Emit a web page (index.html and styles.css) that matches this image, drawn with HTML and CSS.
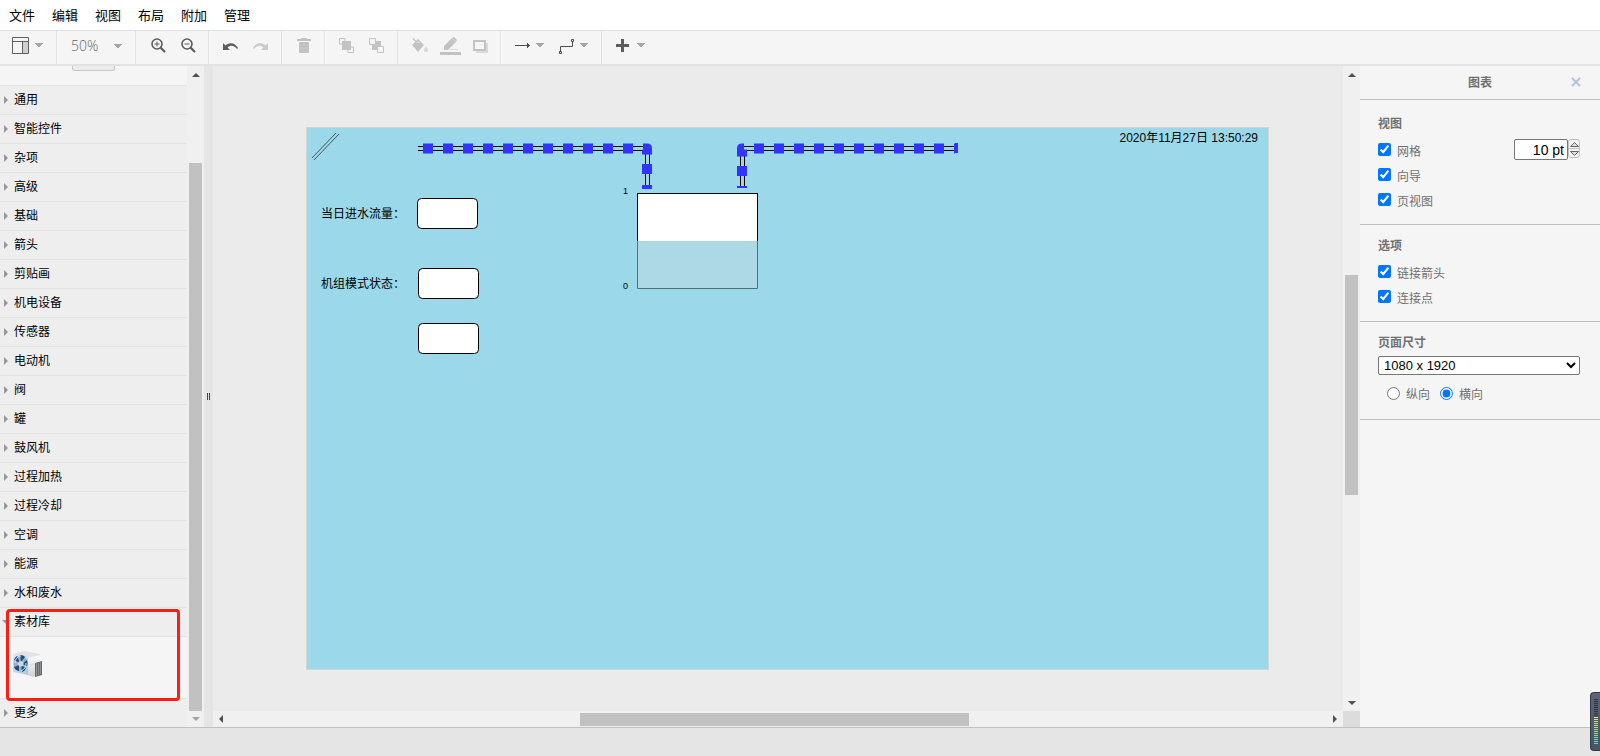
FILE: index.html
```html
<!DOCTYPE html>
<html lang="zh-CN">
<head>
<meta charset="utf-8">
<title>组态编辑器</title>
<link rel="stylesheet" href="styles.css">
</head>
<body>
<svg class="defs" aria-hidden="true">
  <symbol id="caret" viewBox="0 0 8 5"><path d="M0 0h8v1H0zM1 1h6v1H1zM2 2h4v1H2zM3 3h2v1H3z" fill="#a6a6a6"/></symbol>
</svg>
<nav class="menubar">
  <a href="#">文件</a><a href="#">编辑</a><a href="#">视图</a><a href="#">布局</a><a href="#">附加</a><a href="#">管理</a>
</nav>
<div class="toolbar">
  <div class="group g-view">
    <button class="tool" aria-label="视图">
      <svg width="18" height="18" viewBox="0 0 18 18"><path d="M11 5h5v11h-5z" fill="#cfcfcf"/><path d="M.5 .5h16v16H.5zM.5 4.500h16M10.500 4.500v12" fill="none" stroke="#616161"/></svg>
      <svg class="caret"><use href="#caret"/></svg>
    </button>
  </div>
  <div class="group g-zoom">
    <select class="zoom" aria-label="缩放"><option>50%</option></select>
    <svg class="caret"><use href="#caret"/></svg>
  </div>
  <div class="group g-pair g-lens">
    <button class="tool" aria-label="放大"><svg width="16" height="16" viewBox="0 0 16 16" fill="none" stroke="#5c5c5c"><circle cx="6" cy="6" r="5" stroke-width="1.600"/><path d="M9.500 9.500l4.500 4.500" stroke-width="2.200"/><path d="M3.500 6h5M6 3.500v5"/></svg></button>
    <button class="tool" aria-label="缩小"><svg width="16" height="16" viewBox="0 0 16 16" fill="none" stroke="#5c5c5c"><circle cx="6" cy="6" r="5" stroke-width="1.600"/><path d="M9.500 9.500l4.500 4.500" stroke-width="2.200"/><path d="M3.500 6h5"/></svg></button>
  </div>
  <div class="group g-pair">
    <button class="tool" aria-label="撤销"><svg width="16" height="16" viewBox="0 0 16 16"><path d="M0 5v7h7L4.500 9.500C7 7 11 7 14 11l1-1C12 4.500 6.500 4 2.500 7.500z" fill="#5c5c5c"/></svg></button>
    <button class="tool" aria-label="重做"><svg width="16" height="16" viewBox="0 0 16 16"><path d="M15 5v7H8l2.500-2.500C8 7 4 7 1 11l-1-1C3 4.500 8.500 4 12.500 7.500z" fill="#c9c9c9"/></svg></button>
  </div>
  <div class="group g-single">
    <button class="tool" aria-label="删除"><svg width="16" height="16" viewBox="0 0 16 16"><path d="M1 1h4V0h6v1h4v2H1zM3 4h10v11H3z" fill="#c3c3c3"/></svg></button>
  </div>
  <div class="group g-pair">
    <button class="tool" aria-label="置前"><svg width="16" height="16" viewBox="0 0 16 16"><path d="M3 3h9v9H3z" fill="#c3c3c3"/><path d="M6 .5H.5V6M9 14.500h5.500V9M.5 6H3M6 .5V3M9 14.500V12M14.500 9H12" fill="none" stroke="#c3c3c3"/></svg></button>
    <button class="tool" aria-label="置后"><svg width="16" height="16" viewBox="0 0 16 16"><path d="M3 3h9v9H3z" fill="#c3c3c3"/><path d="M.5 .5h6v6h-6zM8.500 8.500h6v6h-6z" fill="#f5f5f5" stroke="#c3c3c3"/></svg></button>
  </div>
  <div class="group g-style">
    <button class="tool" aria-label="填充"><svg width="18" height="18" viewBox="0 0 18 18"><path d="M2 1.500l4 4M2 8l5-5 5 5" stroke="#c3c3c3" fill="none" stroke-width="1.300"/><path d="M1 8l3-2h6l3 2-6 7z" fill="#c3c3c3"/><path d="M7 3v3" stroke="#c3c3c3"/><path d="M15 9l2 3v2l-1 1h-2l-1-1v-2z" fill="#d9d9d9"/></svg></button>
    <button class="tool" aria-label="线条"><svg width="22" height="18" viewBox="0 0 22 18"><path d="M4 9L12 1l2-1 3 3-1 2-8 8H4z" fill="#c3c3c3"/><path d="M12.500 1.500l3 3" stroke="#f5f5f5" stroke-width=".5"/><path d="M10 12h8v1h-8z" fill="#dcdcdc"/><path d="M0 15h21v3H0z" fill="#c3c3c3"/></svg></button>
    <button class="tool" aria-label="阴影"><svg width="16" height="16" viewBox="0 0 16 16"><path d="M3 5h12v10H3z" fill="#d9d9d9"/><path d="M1 3h11v9H1z" fill="#f5f5f5" stroke="#c3c3c3" stroke-width="2"/></svg></button>
  </div>
  <div class="group g-line">
    <button class="tool" aria-label="连接"><svg width="16" height="16" viewBox="0 0 16 16"><path d="M0 7h12V5h1v1h1v1h1v1h-1v1h-1v1h-1V8H0z" fill="#4d4d4d"/></svg><svg class="caret"><use href="#caret"/></svg></button>
    <button class="tool" aria-label="航点"><svg width="16" height="16" viewBox="0 0 16 16" fill="none" stroke="#4d4d4d"><path d="M1.500 13V8.500h12V3M.5 13.500h2v2h-2zM12.500 1.500h2v2h-2z"/></svg><svg class="caret"><use href="#caret"/></svg></button>
  </div>
  <div class="group g-add">
    <button class="tool" aria-label="插入"><svg width="14" height="14" viewBox="0 0 14 14"><path d="M5 0h3v5h5v3H8v5H5V8H0V5h5z" fill="#5c5c5c"/></svg><svg class="caret"><use href="#caret"/></svg></button>
  </div>
</div>
<main class="work">
  <aside class="side">
    <div class="library">
      <div class="search"><button class="tab" aria-label="搜索"></button></div>
      <a class="row" href="#">通用</a>
      <a class="row" href="#">智能控件</a>
      <a class="row" href="#">杂项</a>
      <a class="row" href="#">高级</a>
      <a class="row" href="#">基础</a>
      <a class="row" href="#">箭头</a>
      <a class="row" href="#">剪贴画</a>
      <a class="row" href="#">机电设备</a>
      <a class="row" href="#">传感器</a>
      <a class="row" href="#">电动机</a>
      <a class="row" href="#">阀</a>
      <a class="row" href="#">罐</a>
      <a class="row" href="#">鼓风机</a>
      <a class="row" href="#">过程加热</a>
      <a class="row" href="#">过程冷却</a>
      <a class="row" href="#">空调</a>
      <a class="row" href="#">能源</a>
      <a class="row" href="#">水和废水</a>
      <div class="material">
        <a class="row open" href="#">素材库</a>
        <div class="shapes">
          <svg width="32" height="30" viewBox="0 0 32 30">
            <defs>
              <linearGradient id="body" x1="0" y1="0" x2="0" y2="1"><stop offset="0" stop-color="#fdfdfd"/><stop offset="1" stop-color="#cfd0d3"/></linearGradient>
              <linearGradient id="face" x1="0" y1="0" x2="1" y2="1"><stop offset="0" stop-color="#e3e9f0"/><stop offset="1" stop-color="#a9c4e2"/></linearGradient>
            </defs>
            <path d="M1 6Q4 3 12 2l16 3q1 1 1 3L16 10z" fill="#e2e2e4"/>
            <path d="M15 9l14-3v18l-8 4-6-2z" fill="url(#body)"/>
            <path d="M1 6l15 3v17L1 23z" fill="url(#face)"/>
            <ellipse cx="8.500" cy="14.500" rx="7" ry="8" fill="#8fb4d8"/>
            <path d="M8 14L2 11q1-3 3-4zM9 13L8 6q4 0 5 2zM10 15l5-4q1 3 0 6zM9 16l5 3q-1 3-4 4zM7 16l0 6q-4-1-5-4z" fill="#244f78"/>
            <path d="M3 14q0-6 6-7M14 14q0 6-5 8" fill="none" stroke="#d2e4f4"/>
            <circle cx="8.800" cy="14.800" r="2.800" fill="#ccd3da"/>
            <path d="M23 14l7-2v14l-7 2z" fill="#66696d"/><path d="M24.500 14v13M26.500 14v12M28.500 13v12" stroke="#96999c" stroke-width=".8"/>
            <path d="M17 16l6-1" stroke="#dcdde0"/>
          </svg>
        </div>
        <div class="marker"></div>
      </div>
      <a class="row" href="#">更多</a>
    </div>
    <div class="vbar side-bar"><i class="up"></i><div class="track"><b></b></div><i class="down pale"></i></div>
  </aside>
  <div class="splitter"><span></span><span></span></div>
  <section class="canvas">
    <div class="sheet">
      <svg class="drawing" width="961" height="541" viewBox="0 0 961 541">
        <defs>
          <g id="box"><rect x=".5" y=".5" width="60" height="30" rx="4" fill="#fff" stroke="#000"/></g>
        </defs>
        <path d="M5 30L29 5M7 32L32 6" stroke="#333" stroke-width=".8"/>
        <g fill="none">
          <path d="M111 18.500H342.500V60M111 22.500H338.500V60" stroke="#000"/>
          <path d="M116 20.500H335" stroke="#33f" stroke-width="10" stroke-dasharray="10 10"/>
          <path d="M651 18.500H433.500V60M651 22.500H437.500V60" stroke="#000"/>
          <path d="M447 20.500H648" stroke="#33f" stroke-width="10" stroke-dasharray="10 10"/>
        </g>
        <g fill="#33f">
          <path d="M336 15.500h4q5 0 5 5v6h-10v-4h1zM335 36h10v10h-10zM335 57h10v4h-10z"/>
          <path d="M437 15.500h-2q-5 0-5 5v8h10v-7h-3zM430 38h10v10h-10zM430 58h10v2h-10zM648 15h3v10h-3z"/>
        </g>
        <use href="#box" x="110" y="70"/><use href="#box" x="111" y="140"/><use href="#box" x="111" y="195"/>
        <rect x="330.500" y="65.500" width="120" height="95" fill="#fff" stroke="#000"/>
        <rect x="330" y="113" width="121" height="48" fill="#add8e6"/>
        <path d="M330.500 113v47.500h120V113" fill="none" stroke="#56707a"/>
        <g class="label"><text x="14" y="90">当日进水流量<tspan class="colon">：</tspan></text><text x="14" y="160">机组模式状态<tspan class="colon">：</tspan></text></g>
        <text class="stamp" x="951" y="14" text-anchor="end">2020年11月27日 13:50:29</text>
        <g class="tick"><text x="316" y="66">1</text><text x="316" y="161">0</text></g>
      </svg>
    </div>
  </section>
  <div class="vbar canvas-bar"><i class="up"></i><div class="track"><b></b></div><i class="down"></i></div>
  <div class="hbar"><i class="left"></i><div class="track"><b></b></div><i class="right"></i></div>
  <div class="corner"></div>
  <aside class="format">
    <header><h1>图表</h1><button class="close" aria-label="关闭"><svg width="10" height="10" viewBox="0 0 10 10"><path d="M1 1l8 8M9 1L1 9" stroke="#b3c3dc" stroke-width="2"/></svg></button></header>
    <section class="view">
      <h2>视图</h2>
      <div class="line"><label><input type="checkbox" checked><span>网格</span></label>
        <div class="stepper"><input type="text" value="10 pt" aria-label="网格大小"><div class="spin"><button aria-label="增加"><svg width="9" height="5" viewBox="0 0 9 5"><path d="M.5 4.500h8l-4-4z" fill="#ddd" stroke="#666"/></svg></button><button aria-label="减少"><svg width="9" height="5" viewBox="0 0 9 5"><path d="M.5 .5h8l-4 4z" fill="#ddd" stroke="#666"/></svg></button></div></div>
      </div>
      <div class="line"><label><input type="checkbox" checked><span>向导</span></label></div>
      <div class="line"><label><input type="checkbox" checked><span>页视图</span></label></div>
    </section>
    <section>
      <h2>选项</h2>
      <div class="line"><label><input type="checkbox" checked><span>链接箭头</span></label></div>
      <div class="line"><label><input type="checkbox" checked><span>连接点</span></label></div>
    </section>
    <section class="size">
      <h2><label for="paper">页面尺寸</label></h2>
      <select id="paper"><option>1080 x 1920</option></select>
      <div class="radios"><label><input type="radio" name="dir"><span>纵向</span></label><label><input type="radio" name="dir" checked><span>横向</span></label></div>
    </section>
  </aside>
</main>
<footer class="status"></footer>
<div class="meter"><span></span></div>
</body>
</html>
```
FILE: styles.css
```css
* { box-sizing: border-box; }
body {
  margin: 0;
  height: 100vh;
  display: flex;
  flex-direction: column;
  overflow: hidden;
  background: #f5f5f5;
  font: 12px/16px "Liberation Sans", "Noto Sans CJK SC", sans-serif;
  color: #000;
}
a { color: inherit; text-decoration: none; }
button { border: 0; padding: 0; background: none; display: flex; align-items: center; }
svg { display: block; flex: none; }
.defs { position: absolute; width: 0; height: 0; }

.menubar {
  height: 31px;
  display: flex;
  align-items: center;
  gap: 17px;
  padding: 1px 0 0 9px;
  background: #fff;
  border-bottom: 1px solid #e0e0e0;
  font-size: 13px;
}
.toolbar { height: 35px; display: flex; border-bottom: 2px solid #e2e2e2; }
.group { display: flex; align-items: center; padding: 0 0 4px 14px; border-right: 1px solid #e3e3e3; position: relative; }
.caret { width: 8px; height: 5px; }
.tool { gap: 5px; }
.g-view { width: 57px; padding-left: 12px; }
.g-zoom { width: 79px; }
.g-zoom .caret { position: absolute; right: 13px; top: 13px; pointer-events: none; }
.zoom { appearance: none; border: 0; padding: 0; width: 52px; background: none; color: #666; font: 300 14px/20px "Open Sans", sans-serif; }
.g-pair { width: 73px; gap: 14px; }
.g-lens { padding-left: 15px; }
.g-single { width: 43px; }
.g-style { width: 103px; gap: 11px; padding-left: 13px; }
.g-line { width: 101px; gap: 15px; }
.g-add { border: 0; }
.g-add .tool { gap: 7px; }

.work {
  flex: 1;
  min-height: 0;
  display: grid;
  grid-template: minmax(0, 1fr) 16px / 204px 9px minmax(0, 1fr) 17px 240px;
}
.side { grid-row: 1 / 3; display: grid; grid-template-columns: 1fr 17px; min-height: 0; }
.library { overflow: hidden; }
.search { height: 19px; padding-left: 72px; }
.tab { width: 43px; height: 5px; background: #ececec; border: 1px solid #c6c6c6; border-top: 0; border-radius: 0 0 3px 3px; }
.row {
  display: flex;
  align-items: center;
  height: 29px;
  padding-left: 4px;
  gap: 6px;
  background: #eee;
  border-top: 1px solid #e3e3e3;
}
.row::before { content: ""; border: 4px solid transparent; border-left-color: #979797; border-right: 0; }
.row.open { padding-left: 2px; gap: 4px; }
.row.open::before { border: 4px solid transparent; border-top-color: #979797; border-bottom: 0; }
.material { position: relative; }
.shapes { height: 62px; padding: 12px 12px; border-top: 1px solid #e3e3e3; background: #f5f5f5; }
.marker { position: absolute; left: 6px; top: 2px; width: 174px; height: 92px; border: 3px solid #ff1d12; border-radius: 4px; }

.vbar { background: #f0f0f0; display: flex; flex-direction: column; align-items: center; min-height: 0; }
.hbar { background: #f0f0f0; display: flex; align-items: center; grid-area: 2 / 3; }
.canvas-bar { grid-area: 1 / 4; }
.corner { grid-area: 2 / 4; background: #dcdcdc; }
.track { flex: 1; min-height: 0; display: flex; }
.track::before, .track::after { content: ""; }
.vbar .track { flex-direction: column; width: 13px; }
.track b { background: #c1c1c1; }
.canvas-bar .track::before { flex: 192; }
.canvas-bar b { flex: 219; }
.canvas-bar .track::after { flex: 200; }
.side-bar .track::before { flex: 80; }
.side-bar b { flex: 548; }
.hbar .track { height: 13px; }
.hbar .track::before { flex: 350; }
.hbar b { flex: 389; }
.hbar .track::after { flex: 357; }
.vbar i, .hbar i { border: 4px solid transparent; }
.vbar .up { border-bottom-color: #505050; border-top: 0; margin: 7px 0 6px; }
.vbar .down { border-top-color: #505050; border-bottom: 0; margin: 6px 0 6px; }
.vbar .pale { border-top-color: #a3a3a3; }
.hbar .left { border-right-color: #505050; border-left: 0; margin: 0 7px 0 6px; }
.hbar .right { border-left-color: #505050; border-right: 0; margin: 0 6px 0 7px; }

.splitter { grid-area: 1 / 2 / 3; background: #e5e5e5; display: flex; align-items: center; justify-content: center; gap: 1px; }
.splitter span { width: 1px; height: 7px; background: #444; }

.canvas { grid-area: 1 / 3; background: #ebebeb; overflow: hidden; position: relative; }
.sheet { position: absolute; left: 94px; top: 62px; background: #9bd9ea; outline: 1px solid #cfd6d8; }
.label, .stamp { font-size: 12px; }
.colon { font-family: "Noto Sans CJK TC", sans-serif; }
.tick { font-size: 9px; }

.format { grid-area: 1 / 5 / 3; color: #707070; }
.format header { height: 34px; padding-top: 1px; display: grid; align-items: center; border-bottom: 1px solid #c0c0c0; position: relative; }
h1, h2 { margin: 0; font-size: 12px; line-height: 16px; }
h1 { text-align: center; }
.close { position: absolute; right: 19px; top: 11px; }
.format section { padding: 13px 20px 12px 18px; border-bottom: 1px solid #c0c0c0; }
.format .view { padding-top: 16px; }
h2 { margin-bottom: 5px; }
.line { height: 25px; display: flex; justify-content: space-between; align-items: center; }
.format label { display: flex; align-items: center; }
.line label, .radios label { gap: 6px; }
.format label span { padding-top: 4px; }
input[type="checkbox"], input[type="radio"] { margin: 0; width: 13px; height: 13px; accent-color: #0075ff; }
.stepper { display: flex; }
.stepper input { width: 54px; height: 21px; border: 1px solid #767676; border-radius: 2px; padding: 0 3px; text-align: right; font: 14px/18px "Liberation Sans", sans-serif; }
.spin { width: 12px; height: 19px; border: 1px solid #c0c0c0; border-radius: 3px; display: flex; flex-direction: column; }
.spin button { flex: 1; justify-content: center; }
.spin button + button { border-top: 1px solid #c0c0c0; }
.format .size { padding-bottom: 16px; }
#paper { display: block; width: 100%; height: 19px; border: 1px solid #767676; border-radius: 2px; padding: 0 1px; background-color: #fff; color: #000; font: 13px/16px "Liberation Sans", sans-serif; }
.radios { display: flex; gap: 10px; padding: 8px 9px 0; }

.status { height: 29px; background: #e5e5e5; border-top: 1px solid #c0c0c0; }
.meter { position: fixed; right: 0; bottom: 5px; width: 10px; height: 59px; padding: 6px 2px 6px 3px; background: linear-gradient(#5c6475, #4b5262); border: 1px solid #343a48; border-right: 0; border-radius: 4px 0 0 4px; }
.meter span { display: block; height: 100%; background: repeating-linear-gradient(transparent 0 1px, #525a6a 1px 2px), linear-gradient(#303644 40%, #f0de80 40%, #a8e08c 65%, #54d8cc); }
```
